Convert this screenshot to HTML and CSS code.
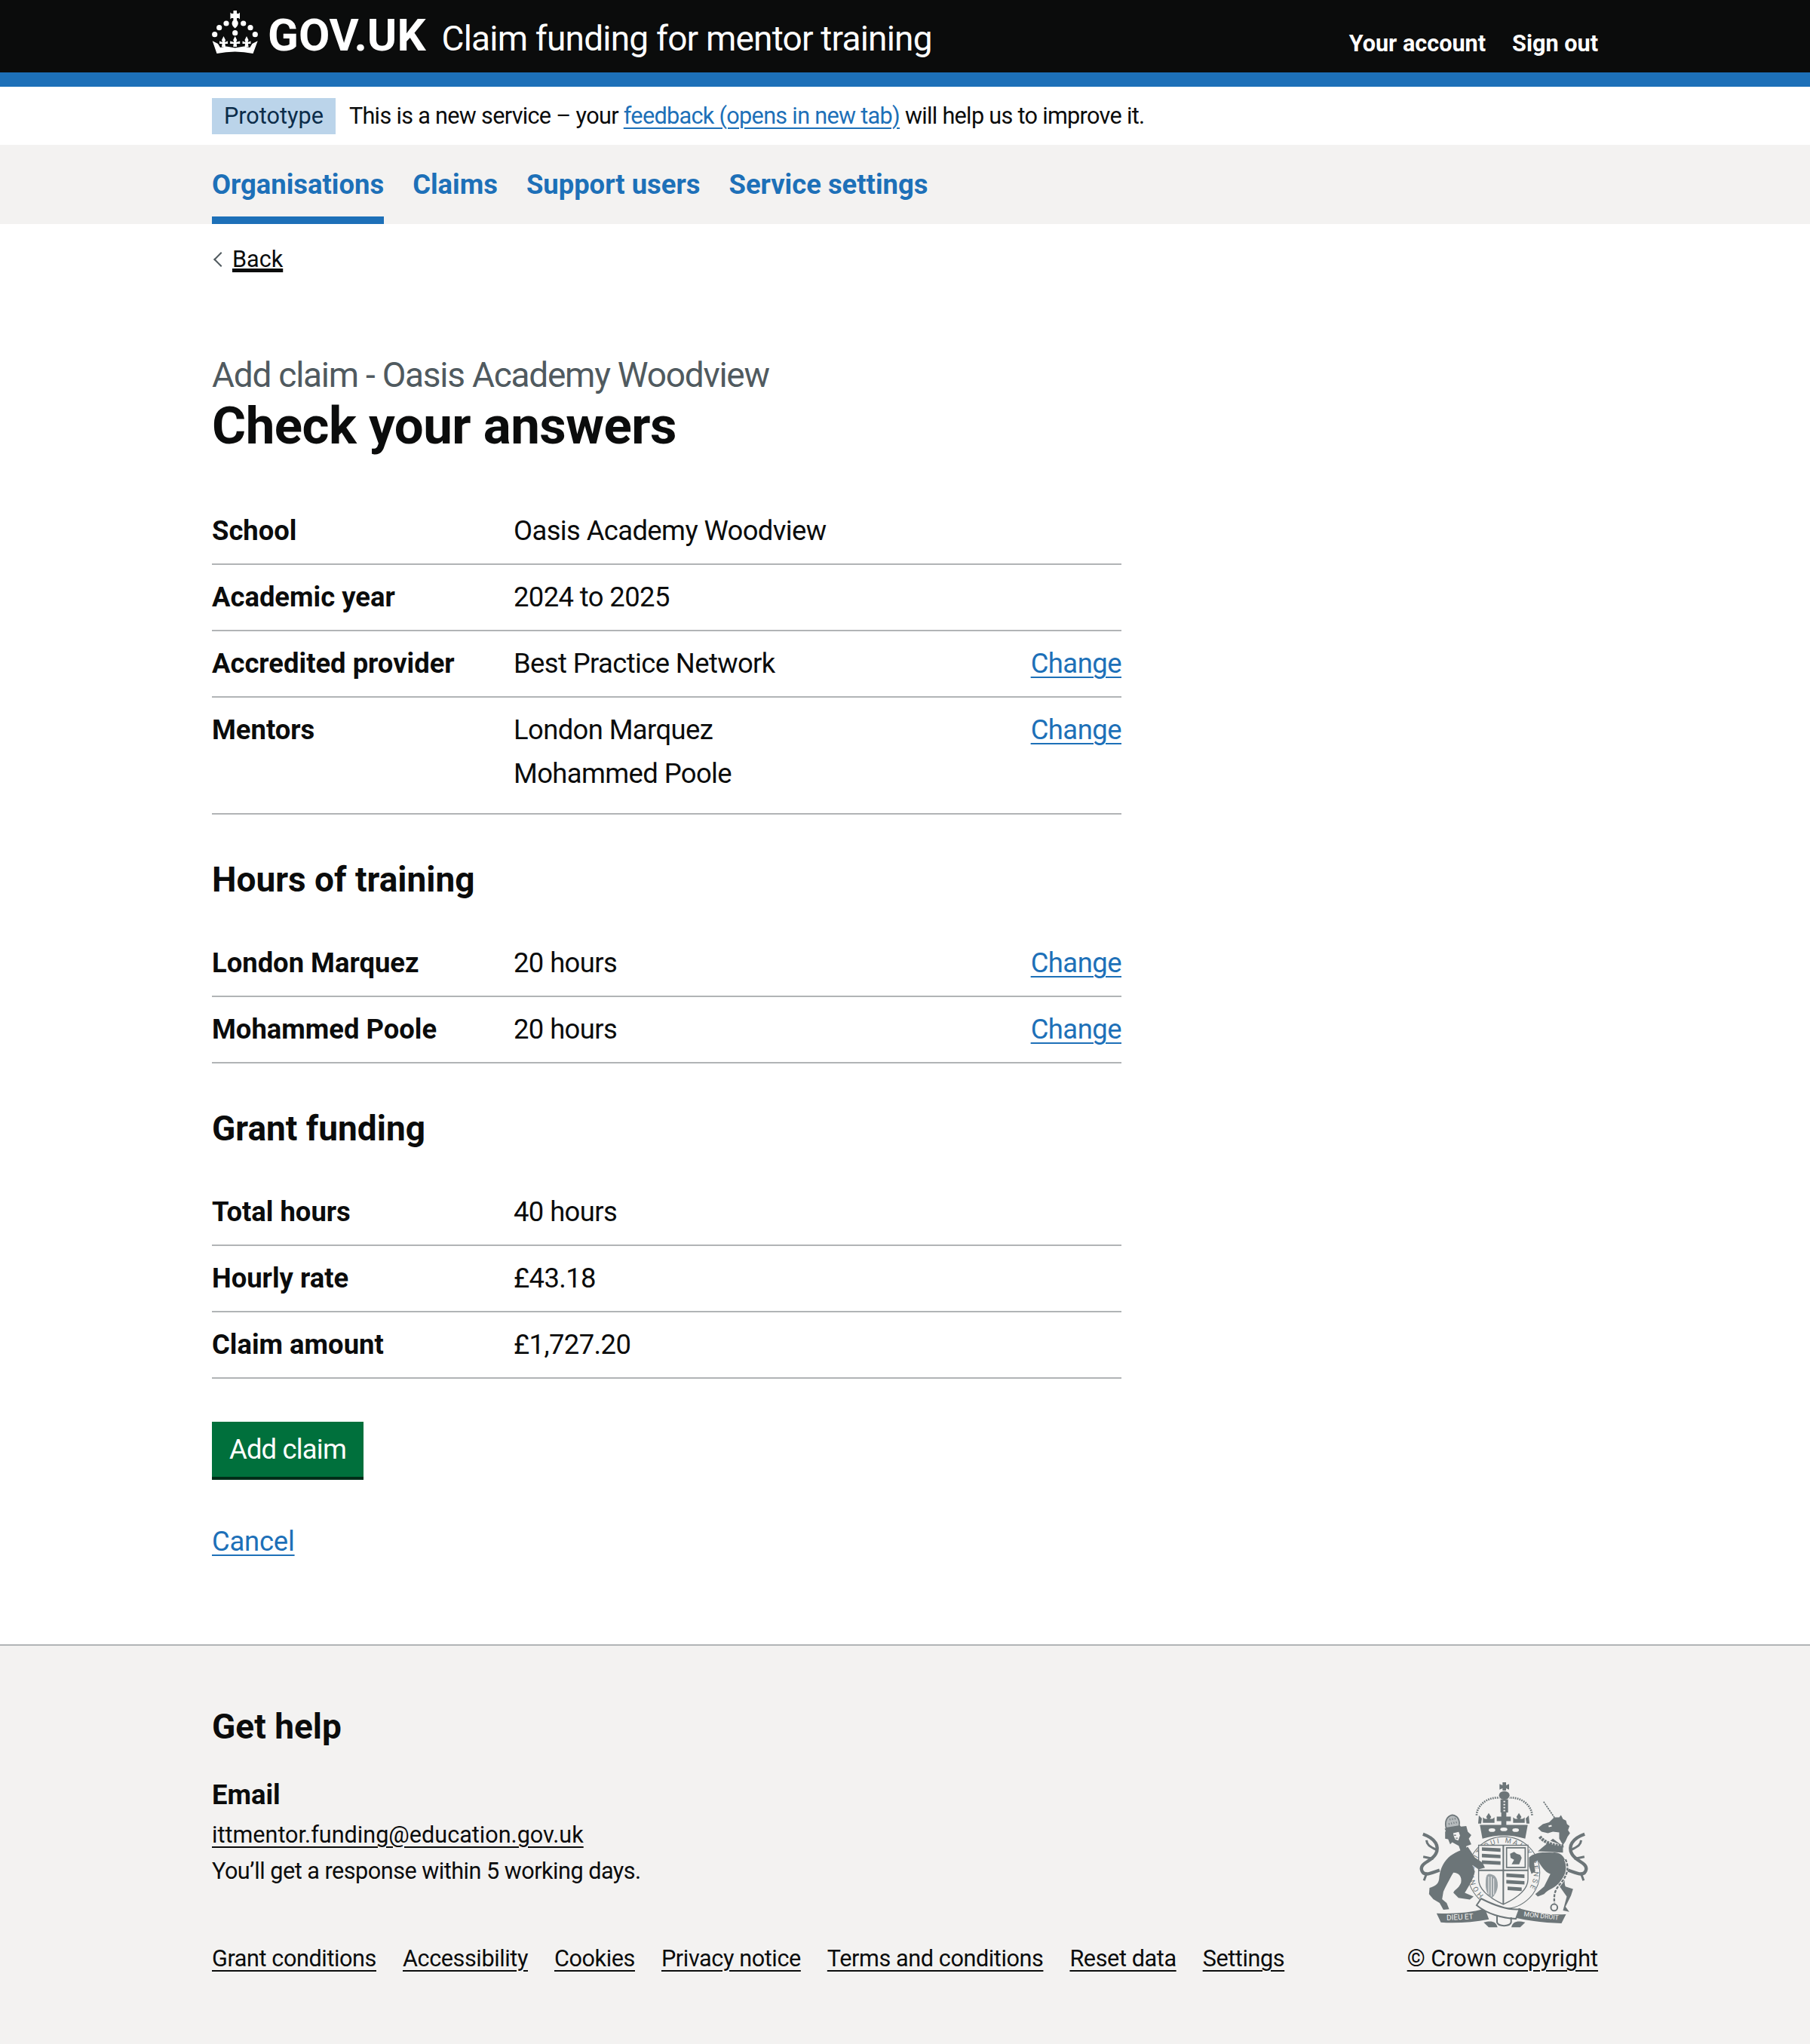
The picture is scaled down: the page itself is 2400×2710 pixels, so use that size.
FILE: index.html
```html
<!DOCTYPE html>
<html lang="en">
<head>
  <meta charset="UTF-8">
  <title>Check your answers - Claim funding for mentor training</title>
  <link rel="stylesheet" href="styles.css">
</head>
<body>

  <header class="site-header">
    <div class="container header-row">
      <div class="brand">
        <svg class="crown" viewBox="0 0 61 57" aria-hidden="true">
          <path d="M28.500 0h4.500v4h2.500l1.500-1.500v9l-1.500-1.500h-2.500v3c2.500 2 3 6.500-2.300 10.500-5.300-4-4.800-8.500-2.300-10.500v-3h-2.500l-1.500 1.500v-9l1.500 1.500h2.500z"/>
          <circle cx="9.700" cy="22.700" r="3.600"/><circle cx="19" cy="17" r="3.600"/>
          <circle cx="41.700" cy="17" r="3.600"/><circle cx="51" cy="22.700" r="3.600"/>
          <circle cx="3.700" cy="31.700" r="3.600"/><circle cx="57.300" cy="31.700" r="3.600"/>
          <circle cx="30.700" cy="29.700" r="3.600"/>
          <path d="M15.500 34l2.500 5-1 3 4-1.500v3.500h-3.500l.5 4h-5l.5-4h-3.500v-3.500l4 1.500-1-3z"/>
          <path d="M30.700 34l2.500 5-1 3 5-1.500v3.500h-4.500l.5 4h-5l.5-4h-4.500v-3.500l5 1.500-1-3z"/>
          <path d="M46 34l2.500 5-1 3 4-1.500v3.500h-3.500l.5 4h-5l.5-4h-3.500v-3.500l4 1.500-1-3z"/>
          <path d="M.7 40.300l7.300 3.700 3 5 8-1.500 11.700 2 11.700-2 8 1.500 3-5 7.300-3.700-6.200 16.700q-23.800-5-48 0z"/>
        </svg>
        <span class="logo-text">GOV.UK</span>
        <span class="service-name">Claim funding for mentor training</span>
      </div>
      <nav class="account-links">
        <a href="#">Your account</a>
        <a href="#">Sign out</a>
      </nav>
    </div>
  </header>
  <div class="blue-bar"></div>

  <div class="container phase-banner">
    <strong class="tag">Prototype</strong>
    <span class="phase-text">This is a new service – your <a class="link" href="#">feedback (opens in new tab)</a> will help us to improve it.</span>
  </div>

  <nav class="primary-nav">
    <div class="container nav-row">
      <a class="nav-item active" href="#">Organisations</a>
      <a class="nav-item" href="#">Claims</a>
      <a class="nav-item" href="#">Support users</a>
      <a class="nav-item" href="#">Service settings</a>
    </div>
  </nav>

  <main class="container main">
    <a class="back-link" href="#"><span class="back-chevron"></span><span class="back-text">Back</span></a>

    <span class="caption">Add claim - Oasis Academy Woodview</span>
    <h1>Check your answers</h1>

    <dl class="summary">
      <div class="row"><dt>School</dt><dd>Oasis Academy Woodview</dd></div>
      <div class="row"><dt>Academic year</dt><dd>2024 to 2025</dd></div>
      <div class="row"><dt>Accredited provider</dt><dd>Best Practice Network</dd><a class="link change" href="#">Change</a></div>
      <div class="row"><dt>Mentors</dt><dd><p>London Marquez</p><p>Mohammed Poole</p></dd><a class="link change" href="#">Change</a></div>
    </dl>

    <h2>Hours of training</h2>
    <dl class="summary">
      <div class="row"><dt>London Marquez</dt><dd>20 hours</dd><a class="link change" href="#">Change</a></div>
      <div class="row"><dt>Mohammed Poole</dt><dd>20 hours</dd><a class="link change" href="#">Change</a></div>
    </dl>

    <h2>Grant funding</h2>
    <dl class="summary">
      <div class="row"><dt>Total hours</dt><dd>40 hours</dd></div>
      <div class="row"><dt>Hourly rate</dt><dd>£43.18</dd></div>
      <div class="row"><dt>Claim amount</dt><dd>£1,727.20</dd></div>
    </dl>

    <button class="button">Add claim</button>
    <a class="link cancel" href="#">Cancel</a>
  </main>

  <footer class="footer">
    <div class="container">
      <h2 class="help-title">Get help</h2>
      <div class="footer-row">
        <div class="footer-left">
          <h3>Email</h3>
          <a class="footer-link" href="#">ittmentor.funding@education.gov.uk</a>
          <p class="response">You’ll get a response within 5 working days.</p>
          <div class="footer-links">
            <a class="footer-link" href="#">Grant conditions</a>
            <a class="footer-link" href="#">Accessibility</a>
            <a class="footer-link" href="#">Cookies</a>
            <a class="footer-link" href="#">Privacy notice</a>
            <a class="footer-link" href="#">Terms and conditions</a>
            <a class="footer-link" href="#">Reset data</a>
            <a class="footer-link" href="#">Settings</a>
          </div>
        </div>
        <div class="footer-right">
          <svg class="crest" viewBox="70 60 670 590" aria-hidden="true">
            <!-- crown -->
            <path d="M400 66h14v12l12-5v22l-12-5v9h-14v-9l-12 5V73l12 5z"/>
            <ellipse cx="407" cy="118" rx="21" ry="17"/>
            <path class="crest-line" stroke-dasharray="5 4" stroke-width="8" d="M297 197C298 155 345 122 388 128M517 197C516 155 469 122 426 128"/>
            <path d="M392 134h30v52h-30z"/>
            <path class="crest-gap" stroke-width="7" stroke-dasharray="5 7" d="M407 140v44"/>
            <path d="M395 186h20v16h18v18h-18v17h-20v-17h-18v-18h18z"/>
            <path d="M345 188l10 16-5 7h10l8-6v22h-46v-22l8 6h10l-5-7zM465 188l10 16-5 7h10l8-6v22h-46v-22l8 6h10l-5-7z"/>
            <path d="M306 198l12 12-3 20h-12zM504 198l-12 12 3 20h12z"/>
            <path d="M310 235h190l-10 55q-85-26-170 0z"/>
            <ellipse class="crest-light" cx="358" cy="256" rx="13" ry="7"/>
            <ellipse class="crest-light" cx="405" cy="253" rx="14" ry="7"/>
            <ellipse class="crest-light" cx="452" cy="256" rx="13" ry="7"/>
            <!-- garter and shield -->
            <circle class="crest-ring" cx="405" cy="425" r="143" stroke-width="3"/>
            <path id="garter" fill="none" d="M330 518A119 119 0 1 1 480 518"/>
            <text class="garter-text"><textPath href="#garter" startOffset="1%">HONI SOIT QUI MAL Y PENSE</textPath></text>
            <path class="crest-light" stroke="#6c7578" stroke-width="4" d="M305 316h196v135c0 46-55 80-98 100-43-20-98-54-98-100z"/>
            <path class="crest-line" stroke-width="6" d="M403 316v235M305 416h196"/>
            <path d="M318 324l74 4v14l-74-4zM318 350l74 4v14l-74-4zM318 376l74 4v14l-74-4zM415 428l72 4v14l-72-4zM415 454l72 4v14l-72-4zM420 480l56 4v14l-56-4z"/>
            <path class="crest-line" stroke-width="5" d="M416 326h74v78h-74z"/>
            <path d="M430 350l16-8 10 8 14 4 6 12-10 26h-30l10-18-14-8z"/>
            <path fill="#9aa2a6" d="M345 430c22 0 36 14 36 44 0 22-12 42-24 52-14-10-24-28-24-52 0-22 0-40 12-44z"/>
            <path class="crest-gap" stroke-width="3" d="M345 440v70M355 440v80M365 448v64"/>
            <!-- lion -->
            <path d="M262 322C240 335 205 345 185 365C160 390 150 420 148 450C146 470 130 480 110 485L108 510L125 530L150 545L165 572L188 570L178 545L160 530L165 500C180 470 195 440 205 425C225 425 240 440 235 465C225 490 205 495 205 505L225 525L270 532L285 520L250 505C265 480 285 450 290 420L280 395L305 412L330 405L320 385L290 365Z"/>
            <path d="M172 262L186 252L180 238L200 244L225 232L235 242L256 240L262 262L276 276L266 290L276 312L256 320L254 340L236 346L226 318L200 304L192 312L184 292L172 290Z"/>
            <path class="crest-light" d="M204 268l22-5 5 14-7 20-12-4-5-12z"/>
            <path d="M208 274h7v5h-7zM214 286h8v4h-8z"/>
            <path fill="#b5babc" stroke="#6c7578" stroke-width="5" d="M176 248c-6-24 0-46 24-52 24 2 32 24 27 44z"/>
            <path class="crest-line" stroke-width="7" stroke-dasharray="3 7" d="M186 232l36-8M190 214l26-4"/>
            <path d="M170 250l60-12 4 13-58 12z"/>
            <path class="crest-line" stroke-width="13" d="M150 415C120 425 85 445 78 412C74 385 120 380 135 350C150 320 135 290 84 272"/>
            <path class="crest-line" stroke-width="9" d="M125 370L85 362M138 335C115 322 100 318 98 296M100 424L88 456"/>
            <!-- unicorn -->
            <path class="crest-line" stroke-width="5" stroke-dasharray="7 3" d="M563 143L606 206"/>
            <path d="M540 248L560 232L585 225L605 205L625 205L632 196L640 212L652 218L656 232L666 240L660 256L668 268L658 282L650 300L640 315L625 290L625 265L600 262L580 268L555 262Z"/>
            <path class="crest-light" d="M582 238l12-3 2 6-12 3z"/>
            <path d="M540 340L600 290L640 320L640 345Z"/>
            <path d="M505 365C530 340 570 345 600 345C630 340 655 365 655 410C655 440 640 455 650 480L680 490L672 515L650 560L665 580L640 575L655 520L620 470C600 490 580 490 565 510L540 520L530 510L565 480L590 430C570 425 550 395 540 375L525 385L530 420L515 430L505 400Z"/>
            <path class="crest-ring" stroke-width="13" stroke-dasharray="9 3" d="M548 282C565 305 610 322 642 318"/>
            <path class="crest-gap" stroke-width="12" d="M650 372c16 34 6 66-20 96s-26 48-24 78"/>
            <path class="crest-line" stroke-width="7" stroke-dasharray="12 5" d="M650 372c16 34 6 66-20 96s-26 48-24 78"/>
            <circle class="crest-line" cx="605" cy="563" r="13" stroke-width="6"/>
            <path class="crest-line" stroke-width="13" d="M660 415C690 425 725 445 732 412C736 385 690 380 675 350C660 320 675 290 726 272"/>
            <path class="crest-line" stroke-width="9" d="M685 370L725 362M672 335C695 322 710 318 712 296M710 424L722 456"/>
            <!-- motto -->
            <path d="M138 586C200 590 270 585 330 568L346 610C280 622 215 626 155 622Z"/>
            <path d="M464 566C530 586 590 594 652 590L634 626C575 624 515 618 452 604Z"/>
            <path class="crest-light" stroke="#6c7578" stroke-width="6" d="M315 528c55 28 110 46 152 42l-14 38c-55-2-115-20-156-54z"/>
            <path d="M325 622c30-8 50-4 55 20h-35zM490 622c-30-8-50-4-55 20h35z"/>
            <path class="crest-line" stroke-width="6" d="M378 596v26c6 18 50 18 56 0v-20"/>
            <text class="motto" x="178" y="614" transform="rotate(-3 178 614)">DIEU ET</text>
            <text class="motto motto-right" x="484" y="598" transform="rotate(6 484 598)">MON DROIT</text>
          </svg>
          <a class="footer-link" href="#">© Crown copyright</a>
        </div>
      </div>
    </div>
  </footer>

</body>
</html>
```

FILE: styles.css
```css
* {
  box-sizing: border-box;
}
body {
  margin: 0;
  min-height: 2710px;
  display: flex;
  flex-direction: column;
  font-family: Roboto, Arial, sans-serif;
  font-size: 36.4px;
  line-height: 48px;
  color: #0b0c0c;
  background: #fff;
}
.container {
  width: 1838px;
  margin: 0 auto;
}
.link {
  color: #1d70b8;
  text-decoration: underline;
  text-decoration-thickness: 2px;
  text-underline-offset: 5px;
}

/* header */
.site-header {
  background: #0b0c0c;
  height: 96px;
  color: #fff;
}
.header-row {
  display: flex;
  justify-content: space-between;
  align-items: center;
  height: 96px;
}
.brand {
  display: flex;
  align-items: center;
  height: 96px;
}
.crown {
  width: 61px;
  height: 57px;
  margin-top: -12px;
  fill: #fff;
}
.logo-text {
  font-size: 60px;
  font-weight: 700;
  margin-left: 13px;
  margin-top: -2px;
}
.service-name {
  font-size: 46px;
  margin-left: 21px;
  margin-top: 6px;
  letter-spacing: -0.8px;
}
.account-links {
  display: flex;
  gap: 35px;
  padding-top: 20px;
}
.account-links a {
  color: #fff;
  font-size: 30.6px;
  font-weight: 700;
  text-decoration: none;
}
.blue-bar {
  height: 19px;
  background: #1d70b8;
}

/* phase banner */
.phase-banner {
  display: flex;
  align-items: center;
  height: 77px;
  font-size: 30.6px;
}
.tag {
  background: #bbd4ea;
  color: #0c2d4a;
  font-weight: 400;
  height: 48px;
  line-height: 48px;
  padding: 0 16px;
  margin-right: 18px;
}
.phase-text {
  letter-spacing: -0.68px;
}

/* navigation */
.primary-nav {
  background: #f3f2f1;
  height: 105px;
}
.nav-row {
  display: flex;
  gap: 38px;
}
.nav-item {
  height: 105px;
  line-height: 105px;
  font-weight: 700;
  color: #1d70b8;
  text-decoration: none;
}
.nav-item.active {
  border-bottom: 10px solid #1d70b8;
}

/* main */
.main {
  display: block;
  padding-top: 18px;
}
.back-link {
  display: inline-flex;
  align-items: center;
  font-size: 30.6px;
  line-height: 40px;
  color: #0b0c0c;
}
.back-chevron {
  width: 14px;
  height: 14px;
  border-left: 2px solid #505a5f;
  border-bottom: 2px solid #505a5f;
  transform: rotate(45deg);
  margin: 0 8px 0 5px;
}
.back-text {
  text-decoration: underline;
  text-decoration-thickness: 2px;
  text-underline-offset: 5px;
}
.caption {
  display: block;
  margin-top: 105px;
  font-size: 46px;
  line-height: 57px;
  color: #505a5f;
  letter-spacing: -1.25px;
}
h1 {
  margin: 0 0 57px;
  font-size: 69px;
  line-height: 78px;
  font-weight: 700;
  letter-spacing: -0.5px;
}
h2 {
  margin: 0;
  font-size: 46px;
  line-height: 57px;
  font-weight: 700;
}
.main h2 {
  padding: 58px 0 36px;
  height: 154px;
}
.summary {
  width: 1206px;
  margin: 0;
}
.row {
  display: flex;
  padding: 19px 0;
  border-bottom: 2px solid #b1b4b6;
}
.row dt {
  width: 400px;
  font-weight: 700;
}
.row dd {
  margin: 0;
  flex: 1;
  letter-spacing: -0.6px;
}
.row p {
  margin: 0 0 9.5px;
}
.change {
  letter-spacing: -0.5px;
}
.button {
  display: block;
  margin: 57px 0 0;
  width: 201px;
  height: 77px;
  padding: 0 0 4px;
  border: 0;
  background: #00703c;
  box-shadow: inset 0 -4px 0 #002d18;
  color: #fff;
  font-family: inherit;
  font-size: 36.4px;
  letter-spacing: -0.8px;
}
.cancel {
  display: inline-block;
  margin: 58px 0 112px;
  letter-spacing: -0.2px;
}

/* footer */
.footer {
  flex: 1;
  background: #f3f2f1;
  border-top: 2px solid #b1b4b6;
  padding-top: 79px;
}
.help-title {
  margin-bottom: 38px;
}
.footer-row {
  display: flex;
  justify-content: space-between;
  align-items: flex-end;
}
.footer h3 {
  margin: 0 0 3px;
  font-size: 36.4px;
  line-height: 48px;
}
.footer-link {
  color: #0b0c0c;
  font-size: 30.6px;
  line-height: 40px;
  text-decoration: underline;
  text-decoration-thickness: 2px;
  text-underline-offset: 5px;
}
.response {
  margin: 6px 0 0;
  font-size: 30.6px;
  line-height: 40px;
  letter-spacing: -0.5px;
}
.footer-links {
  display: flex;
  gap: 35px;
  margin-top: 76px;
}
.footer-links .footer-link {
  letter-spacing: -0.4px;
}
.footer-right {
  display: flex;
  flex-direction: column;
  align-items: center;
}
.crest {
  width: 224px;
  height: 197px;
  margin: 0 0 19px 4px;
  fill: #6c7578;
}
.crest-line {
  fill: none;
  stroke: #6c7578;
}
.crest-ring {
  fill: #f3f2f1;
  stroke: #6c7578;
}
.crest-light {
  fill: #f3f2f1;
}
.crest-gap {
  fill: none;
  stroke: #f3f2f1;
}
.motto {
  font-size: 30px;
  fill: #f3f2f1;
}
.motto-right {
  font-size: 26px;
}
.garter-text {
  font-size: 28px;
  letter-spacing: 7px;
}
```
